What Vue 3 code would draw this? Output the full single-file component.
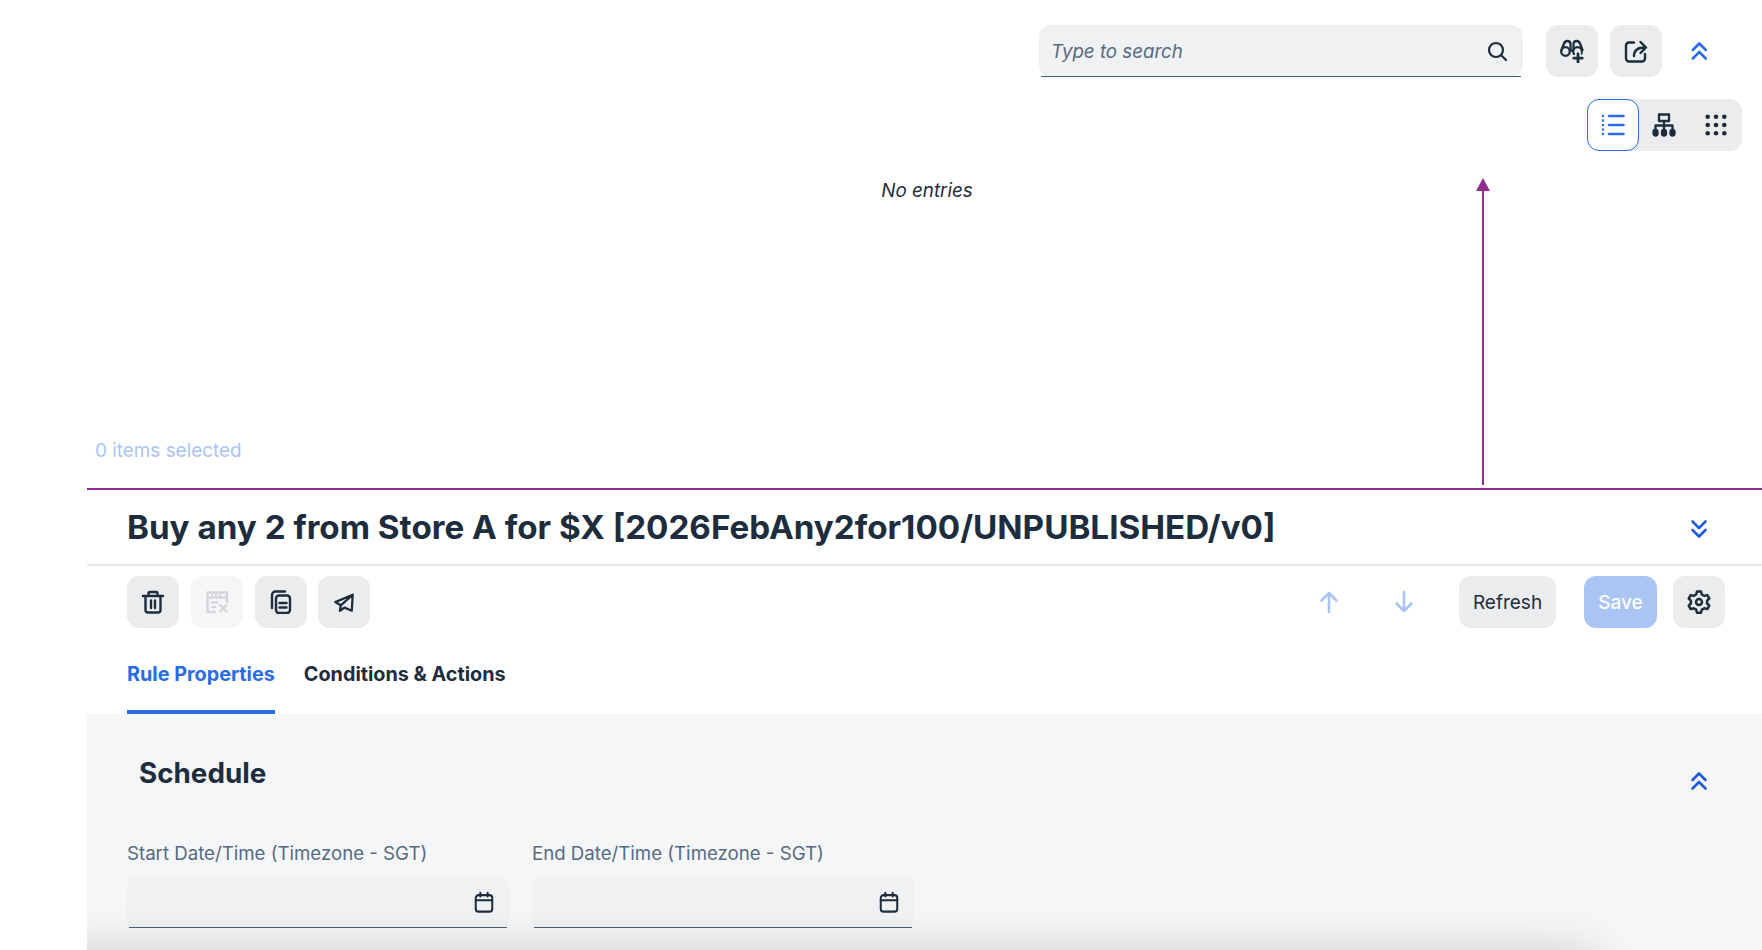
<script setup>
const calendars = [
  { id: 'start', label: 'Start Date/Time (Timezone - SGT)' },
  { id: 'end', label: 'End Date/Time (Timezone - SGT)' }
]
</script>

<template>
  <div class="page">
    <aside class="rail"></aside>
    <main class="main">
      <section class="list-pane">
        <div class="search-row">
          <div class="search">
            <span class="placeholder">Type to search</span>
            <svg class="ic" viewBox="0 0 24 24" fill="none" stroke="#1d2d3e" stroke-width="2.2" stroke-linecap="round"><circle cx="11" cy="11" r="7"/><path d="M16.2 16.2 21 21"/></svg>
          </div>
          <button class="btn square">
            <svg class="ic" viewBox="0 0 24 24" fill="none" stroke="#1d2d3e" stroke-width="2.300" stroke-linecap="round" stroke-linejoin="round"><circle cx="5.500" cy="12.500" r="4.300"/><circle cx="17.500" cy="12.500" r="4.300"/><path d="M1.500 11 4 4.500Q5 2 7.500 2T10.500 4.500V10M22.500 11 20 4.500Q19 2 16.500 2T13.500 4.500V10M9.800 11.500h3.400"/><path d="M18 14.500v9M13.500 19h9" stroke="#ebecee" stroke-width="6"/><path d="M18 15v8.500M13.800 19.200h8.400" stroke-width="2.800"/></svg>
          </button>
          <button class="btn square">
            <svg class="ic" viewBox="0 0 24 24" fill="none" stroke="#1d2d3e" stroke-width="2.400" stroke-linecap="round" stroke-linejoin="round"><path d="M10 3.500H5A3 3 0 0 0 2 6.500V19.500A3 3 0 0 0 5 22.500H18A3 3 0 0 0 21 19.500V15"/><path d="M10 17C10 11 13.500 8.500 21 8.500M16.500 3 22 8.500 16.500 14"/></svg>
          </button>
          <button class="btn square ghost">
            <svg class="ic" viewBox="0 0 24 24" fill="none" stroke="#2a6be6" stroke-width="2.600" stroke-linecap="round" stroke-linejoin="round"><path d="M4.800 11 11.300 4.500 17.800 11M4.800 19.500 11.300 13 17.800 19.500"/></svg>
          </button>
        </div>
        <div class="view-row">
          <div class="toggle">
            <button class="toggle-btn active">
              <svg class="ic" viewBox="0 0 24 24" fill="none" stroke="#2a6be6" stroke-width="2.500" stroke-linecap="round"><path d="M8 3h14.500M8 12h14.500M8 21h14.500M2 3h.01M2 7.500h.01M2 12h.01M2 16.500h.01M2 21h.01"/></svg>
            </button>
            <button class="toggle-btn">
              <svg class="ic" viewBox="0 0 24 24" fill="none" stroke="#1d2d3e" stroke-width="2.300" stroke-linejoin="round"><rect x="7" y="1.500" width="10" height="6.500"/><path d="M12 8V17M3.500 17V12.500H20.500V17"/><rect x="1.500" y="17" width="4" height="5.500" rx="2" fill="#1d2d3e"/><rect x="10" y="17" width="4" height="5.500" rx="2" fill="#1d2d3e"/><rect x="18.500" y="17" width="4" height="5.500" rx="2" fill="#1d2d3e"/></svg>
            </button>
            <button class="toggle-btn">
              <svg class="ic" viewBox="0 0 24 24" fill="#1d2d3e"><circle cx="3.700" cy="3.700" r="2.300"/><circle cx="12" cy="3.700" r="2.300"/><circle cx="20.300" cy="3.700" r="2.300"/><circle cx="3.700" cy="12" r="2.300"/><circle cx="12" cy="12" r="2.300"/><circle cx="20.300" cy="12" r="2.300"/><circle cx="3.700" cy="20.300" r="2.300"/><circle cx="12" cy="20.300" r="2.300"/><circle cx="20.300" cy="20.300" r="2.300"/></svg>
            </button>
          </div>
        </div>
        <p class="empty">No entries</p>
        <p class="selected">0 items selected</p>
        <svg class="resize-arrow" width="14" height="307" viewBox="0 0 14 307"><path d="M7 0 14 13H0Z" fill="#922d8e"/><path d="M7 12V307" stroke="#922d8e" stroke-width="2"/></svg>
      </section>

      <section class="detail">
        <header class="title-row">
          <h1>Buy any 2 from Store A for $X [2026FebAny2for100/UNPUBLISHED/v0]</h1>
          <svg class="chev" viewBox="0 0 24 24" fill="none" stroke="#1f5bd8" stroke-width="2.600" stroke-linecap="round" stroke-linejoin="round"><path d="M5.500 4.500 12 11 18.500 4.500M5.500 13 12 19.500 18.500 13"/></svg>
        </header>
        <div class="toolbar">
          <div class="tool-group">
            <button class="btn square">
              <svg class="ic" viewBox="0 0 24 24" fill="none" stroke="#1d2d3e" stroke-width="2.400" stroke-linecap="round" stroke-linejoin="round"><path d="M2 6h20M7.500 6V3.500A1.500 1.500 0 0 1 9 2h6A1.500 1.500 0 0 1 16.500 3.500V6M4.500 6v14a2.500 2.500 0 0 0 2.500 2.500h10a2.500 2.500 0 0 0 2.500-2.500V6M10 10.500v7.500M14 10.500v7.500"/></svg>
            </button>
            <button class="btn square off">
              <svg class="ic" viewBox="0 0 24 24" fill="none" stroke="#d4d6d9" stroke-width="2.400" stroke-linecap="round" stroke-linejoin="round"><path d="M10 22H2.500V2.500H22V12M2.500 7.500H22M7 12.500h5M7 17h3M7 5h.01M11 5h.01M15 5h.01M15 15l6.500 6.500M21.500 15 15 21.500"/></svg>
            </button>
            <button class="btn square">
              <svg class="ic" viewBox="0 0 24 24" fill="none" stroke="#1d2d3e" stroke-width="2.400" stroke-linecap="round" stroke-linejoin="round"><path d="M16 1.500H6.500A3.500 3.500 0 0 0 3 5V18"/><rect x="7" y="5.500" width="14" height="17.500" rx="3"/><path d="M10.500 13h7M10.500 17.500h7"/></svg>
            </button>
            <button class="btn square">
              <svg class="ic plane" viewBox="0 0 24 24" fill="none" stroke="#1d2d3e" stroke-width="2.500" stroke-linecap="round" stroke-linejoin="round"><path d="M21.500 3 2.500 11 8.500 14.500 7.500 20.500 12.500 17 20.500 20.500ZM8.500 14.500 21.500 3"/></svg>
            </button>
          </div>
          <div class="tool-group right">
            <svg class="arrow up" viewBox="0 0 24 24" fill="none" stroke="#a9c4f3" stroke-width="2.600" stroke-linecap="round" stroke-linejoin="round"><path d="M12 22V3M4.500 10.500 12 3 19.500 10.500"/></svg>
            <svg class="arrow down" viewBox="0 0 24 24" fill="none" stroke="#a9c4f3" stroke-width="2.600" stroke-linecap="round" stroke-linejoin="round"><path d="M12 2V21M4.500 13.500 12 21 19.500 13.500"/></svg>
            <button class="btn text refresh">Refresh</button>
            <button class="btn text save">Save</button>
            <button class="btn square">
              <svg class="ic" viewBox="0 0 24 24" fill="none" stroke="#1d2d3e" stroke-width="2.500" stroke-linejoin="round"><circle cx="12" cy="12" r="3"/><path d="M10 1.500h4l.8 3 2.500 1.400 3-.8 2 3.400-2.200 2.200v2.800l2.200 2.200-2 3.400-3-.8-2.500 1.400-.8 3h-4l-.8-3-2.500-1.400-3 .8-2-3.400 2.200-2.200v-2.800L1.700 8.500l2-3.400 3 .8 2.500-1.400Z"/></svg>
            </button>
          </div>
        </div>
        <nav class="tabs">
          <a class="tab current">Rule Properties</a>
          <a class="tab">Conditions &amp; Actions</a>
        </nav>
        <div class="form-area">
          <div class="section-head">
            <h2>Schedule</h2>
            <svg class="chev" viewBox="0 0 24 24" fill="none" stroke="#1f5bd8" stroke-width="2.600" stroke-linecap="round" stroke-linejoin="round"><path d="M5.500 11 12 4.500 18.500 11M5.500 19.500 12 13 18.500 19.500"/></svg>
          </div>
          <div class="fields">
            <div v-for="c in calendars" :key="c.id" class="field">
              <label>{{ c.label }}</label>
              <div class="input">
                <svg class="cal" viewBox="0 0 24 24" fill="none" stroke="#1d2d3e" stroke-width="2.200" stroke-linecap="round" stroke-linejoin="round"><rect x="3" y="4.500" width="18" height="18" rx="3"/><path d="M3 10h18M8 2v4M16 2v4"/></svg>
              </div>
            </div>
          </div>
        </div>
      </section>
      <div class="footer-shadow"></div>
    </main>
  </div>
</template>

<style>
html, body { margin: 0; background: #fff; }
</style>

<style scoped>
.page { display: flex; width: 1762px; height: 950px; overflow: hidden; font-family: Inter, "Noto Sans", "Liberation Sans", sans-serif; color: #1d2d3e; }
.rail { flex: 0 0 87px; background: #fff; }
.main { position: relative; flex: 1; min-width: 0; display: flex; flex-direction: column; overflow: hidden; }
button { border: 0; padding: 0; font: inherit; cursor: pointer; }

.list-pane { position: relative; height: 488px; flex: none; box-sizing: border-box; padding: 25px 36px 0 0; }
.search-row { display: flex; justify-content: flex-end; align-items: center; gap: 12px; }
.search { position: relative; width: 484px; height: 52px; box-sizing: border-box; margin-right: 11px; padding: 0 14px 0 12px; display: flex; align-items: center; justify-content: space-between; background: #eff1f2; border-radius: 12px; }
.search::after, .input::after { content: ""; position: absolute; left: 2px; right: 2px; bottom: 0; height: 1.500px; background: #4c627c; }
.placeholder { font-style: italic; font-size: 18.700px; color: #556b82; }
.ic { width: 24px; height: 24px; display: block; }
.plane { width: 22px; height: 22px; margin-top: 2px; }
.btn { display: flex; align-items: center; justify-content: center; height: 52px; border-radius: 12px; background: #ebecee; color: #1d2d3e; }
.square { width: 52px; flex: none; }
.ghost { background: transparent; }
.off { background: #f5f6f7; }

.view-row { display: flex; justify-content: flex-end; margin: 22px -16px 0 0; }
.toggle { display: flex; background: #ebecee; border-radius: 12px; }
.toggle-btn { width: 51.700px; height: 52px; display: flex; align-items: center; justify-content: center; background: transparent; border-radius: 12px; box-sizing: border-box; }
.toggle-btn.active { background: #fff; border: 1.500px solid #2a6be6; }

.empty { margin: 0; position: absolute; left: 5px; right: 0; top: 178px; text-align: center; font-style: italic; font-size: 18.800px; line-height: 26px; }
.selected { margin: 0; position: absolute; left: 8px; top: 438px; font-size: 18.900px; line-height: 26px; color: #a9c4f3; }
.resize-arrow { position: absolute; left: 1389px; top: 178px; }

.detail { flex: 1; display: flex; flex-direction: column; min-height: 0; border-top: 2px solid #922d8e; }
.title-row { height: 76px; flex: none; box-sizing: border-box; padding: 0 36px 0 40px; display: flex; align-items: center; justify-content: space-between; border-bottom: 2px solid #e8e9ea; }
h1 { margin: 0; font-size: 33.200px; line-height: 44px; font-weight: 700; white-space: nowrap; }
.chev { width: 24px; height: 24px; display: block; margin: 3px 15px 0 0; flex: none; }

.toolbar { height: 52px; flex: none; margin-top: 10px; padding: 0 37px 0 40px; display: flex; justify-content: space-between; }
.tool-group { display: flex; gap: 11.800px; align-items: center; }
.right { gap: 0; }
.arrow { width: 24px; height: 24px; display: block; flex: none; }
.arrow.down { margin-left: 51px; }
.text { font-size: 19px; box-sizing: border-box; padding-top: 1px; }
.refresh { width: 97px; margin-left: 43px; }
.save { width: 73px; margin: 0 16px 0 28px; background: #aac5f4; color: #fff; font-weight: 500; }

.tabs { height: 86px; flex: none; padding-left: 40px; display: flex; gap: 29px; box-sizing: border-box; }
.tab { height: 86px; box-sizing: border-box; padding-top: 31px; line-height: 30px; font-size: 19.800px; font-weight: 700; color: #1d2d3e; white-space: nowrap; }
.tab.current { color: #2a6be6; border-bottom: 4px solid #2a6be6; }

.form-area { flex: 1; background: #f5f6f7; padding: 0 40px; min-height: 0; }
.section-head { height: 126px; display: flex; justify-content: space-between; padding: 41px 0 0 12px; box-sizing: border-box; }
h2 { margin: 0; font-size: 27.800px; line-height: 36px; font-weight: 700; }
.section-head .chev { margin: 14px 11px 0 0; }
.fields { display: flex; gap: 23px; }
.field { width: 382px; }
label { display: block; font-size: 18.650px; line-height: 26px; color: #556b82; margin-bottom: 10px; }
.input { position: relative; height: 52px; box-sizing: border-box; padding-right: 14px; display: flex; align-items: center; justify-content: flex-end; background: #eff1f2; border-radius: 8px; }
.cal { width: 22px; height: 22px; display: block; }
.footer-shadow { position: absolute; left: -60px; width: 1575px; top: 950px; height: 60px; border-radius: 30px; box-shadow: 0 0 44px rgba(0, 0, 0, 0.16); pointer-events: none; }
</style>
